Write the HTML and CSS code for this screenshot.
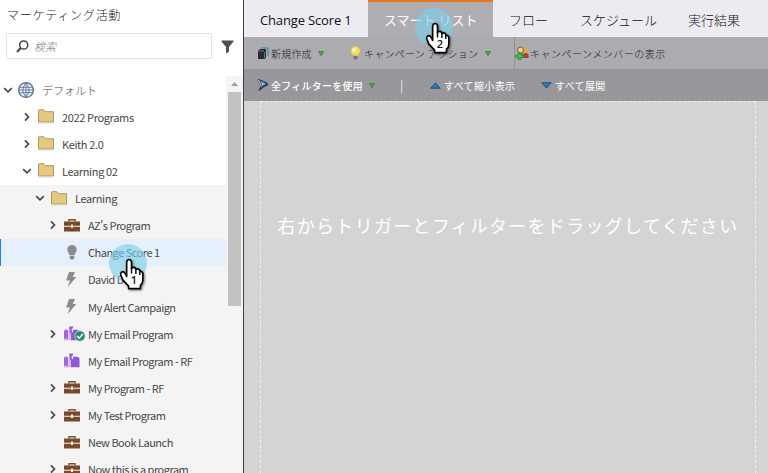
FILE: index.html
```html
<!DOCTYPE html>
<html lang="ja">
<head>
<meta charset="utf-8">
<title>マーケティング活動</title>
<link rel="stylesheet" href="styles.css">
</head>
<body>
<svg class="defs" width="0" height="0" aria-hidden="true">
  <defs>
    <symbol id="right" viewBox="0 0 10 10"><path d="M3 1.3 6.5 5 3 8.7" fill="none" stroke="#484848" stroke-width="1.7"/></symbol>
    <symbol id="down" viewBox="0 0 10 10"><path d="M1.2 3.2 5 6.8 8.8 3.2" fill="none" stroke="#484848" stroke-width="1.7"/></symbol>
    <symbol id="folder" viewBox="0 0 16 15"><path d="M.5 13V1.5Q.5.7 1.3.7H5.7L7.6 2.7H15.5V13Z" fill="#e6c87e" stroke="#a68e5f" stroke-width=".9"/><path d="M0 14H16" stroke="#d9d5ca"/></symbol>
    <symbol id="case" viewBox="0 0 16 14"><path d="M5 3V1.2H11V3" fill="none" stroke="#7a5034" stroke-width="1.5"/><path d="M0 3H16V7.2H9V6H7V7.2H0ZM0 8.2H7V9.6H9V8.2H16V13H0Z" fill="#78492b"/></symbol>
    <symbol id="bulb" viewBox="0 0 16 16"><path d="M8 0a5 5 0 0 0-5 5c0 2.3 2 3.700 2.300 6h5.400C11 8.700 13 7.300 13 5a5 5 0 0 0-5-5ZM5.500 11.700h5v2L9.500 15.500h-3l-1-1.800Z" fill="#8b8b8b"/></symbol>
    <symbol id="bolt" viewBox="0 0 16 16"><path d="M4.800 0H11.200L8.800 5.200H12.700L3.300 16 5.800 9H1.700Z" fill="#8b8b8b"/></symbol>
    <symbol id="mail" viewBox="0 0 16 14"><path d="M0 13V5Q0 3 2 3Q4.200 3 4.200 5V13Z" fill="#a267dc"/><path d="M0 12H5V13.800H0Z" fill="#c9a9e8"/><path d="M6.700 13.700V7L5.300 5V0H9V2H7.700V5L9 6V3.200H12Q15.500 3 15.500 6V13.700Z" fill="#9256d9"/><path d="M5.300 3V13.500" stroke="#c9a9e8"/></symbol>
    <symbol id="hand" viewBox="0 0 26 34"><path d="M7.500 19V4Q8 1.500 10 1.500T12.500 4V11Q13 9.500 15 9.700T17 12Q18.500 10.700 20 11.500T21 14Q23.700 13.200 24.200 16V23Q24 26.500 21.700 28V31.500H9.500V29L3.500 22.500 1.500 17.500Q1 14.200 3.500 14Q6 14.500 7.500 19Z" fill="#fff" stroke="#050505" stroke-width="1.700" stroke-linejoin="round"/><path d="M12.500 10V16M17 11.500V16.500M21 13.500V17.500" stroke="#111" stroke-width="1.500"/></symbol>
    <symbol id="green" viewBox="0 0 7 6"><path d="M.5.500H6.500L3.500 5.500Z" fill="#45b33b" stroke="#2c7d29" stroke-width="1"/></symbol>
  </defs>
</svg>
<div class="app">
  <aside class="sidebar">
    <h1 class="title">マーケティング活動</h1>
    <div class="search-row">
      <div class="search">
        <svg width="13" height="13" viewBox="0 0 13 13"><circle cx="7.700" cy="5" r="4.100" fill="none" stroke="#484848" stroke-width="1.500"/><path d="M4.800 8 1 12" stroke="#484848" stroke-width="2"/></svg>
        <span class="placeholder">検索</span>
      </div>
      <svg class="funnel" width="13" height="14" viewBox="0 0 13 14"><path d="M.5.500H12.500V1.500L8 7V11.500L5 13.500V7L.5 1.500Z" fill="#505050"/></svg>
    </div>
    <div class="tree-wrap">
      <div class="tree">
        <div class="row l0"><svg class="chev"><use href="#down"/></svg><svg class="icon" viewBox="0 0 16 16"><circle cx="8" cy="8" r="7.300" fill="#f5f8fb" stroke="#667b9b" stroke-width="1.500"/><path d="M1 5.300H15M1 10.700H15M.5 8H15.500M8 1V15M8 1Q1.500 8 8 15M8 1Q14.500 8 8 15" fill="none" stroke="#667b9b" stroke-width="1"/></svg><span class="jp">デフォルト</span></div>
        <div class="row l1"><svg class="chev"><use href="#right"/></svg><svg class="icon"><use href="#folder"/></svg><span>2022 Programs</span></div>
        <div class="row l1"><svg class="chev"><use href="#right"/></svg><svg class="icon"><use href="#folder"/></svg><span>Keith 2.0</span></div>
        <div class="row l1"><svg class="chev"><use href="#down"/></svg><svg class="icon"><use href="#folder"/></svg><span>Learning 02</span></div>
        <div class="row l2 shade"><svg class="chev"><use href="#down"/></svg><svg class="icon"><use href="#folder"/></svg><span>Learning</span></div>
        <div class="row l3 shade"><svg class="chev"><use href="#right"/></svg><svg class="icon"><use href="#case"/></svg><span>AZ's Program</span></div>
        <div class="row l3 selected"><i class="chev"></i><svg class="icon"><use href="#bulb"/></svg><span>Change Score 1</span></div>
        <div class="row l3 shade"><i class="chev"></i><svg class="icon"><use href="#bolt"/></svg><span>David D</span></div>
        <div class="row l3 shade"><i class="chev"></i><svg class="icon"><use href="#bolt"/></svg><span>My Alert Campaign</span></div>
        <div class="row l3 shade"><svg class="chev"><use href="#right"/></svg><div class="icon"><svg class="icon"><use href="#mail"/></svg><svg class="check" viewBox="0 0 12 12"><circle cx="6" cy="6" r="5.200" fill="#298a67" stroke="#f5f5f5" stroke-width=".6"/><path d="M3 6 5.200 8.200 9 3.800" fill="none" stroke="#fff" stroke-width="1.500"/></svg></div><span>My Email Program</span></div>
        <div class="row l3 shade"><i class="chev"></i><svg class="icon"><use href="#mail"/></svg><span>My Email Program - RF</span></div>
        <div class="row l3 shade"><svg class="chev"><use href="#right"/></svg><svg class="icon"><use href="#case"/></svg><span>My Program - RF</span></div>
        <div class="row l3 shade"><svg class="chev"><use href="#right"/></svg><svg class="icon"><use href="#case"/></svg><span>My Test Program</span></div>
        <div class="row l3 shade"><i class="chev"></i><svg class="icon"><use href="#case"/></svg><span>New Book Launch</span></div>
        <div class="row l3 shade"><svg class="chev"><use href="#right"/></svg><svg class="icon"><use href="#case"/></svg><span>Now this is a program</span></div>
      </div>
      <div class="scrollbar"><svg width="7" height="4" viewBox="0 0 7 4"><path d="M0 4 3.500 0 7 4Z" fill="#a0a0a0"/></svg><div class="thumb"></div></div>
    </div>
    <div class="click click-one"><svg><use href="#hand"/></svg><b>1</b></div>
  </aside>
  <main class="main">
    <nav class="tabs">
      <div class="tab t1">Change Score 1</div>
      <div class="tab active">スマート リスト</div>
      <div class="tab t3">フロー</div>
      <div class="tab t4">スケジュール</div>
      <div class="tab t5">実行結果</div>
    </nav>
    <div class="bar tools">
      <div class="item new"><svg width="12" height="13" viewBox="0 0 12 13"><path d="M4 1H11V9" fill="none" stroke="#4a91c4" stroke-width="1.500"/><path d="M1 4 3 2H9V10L8 12H1Z" fill="#282c30"/><path d="M1.500 4H7M7.500 5V11" stroke="#69717a"/></svg><span>新規作成</span><svg class="tri"><use href="#green"/></svg></div>
      <div class="item action"><svg width="11" height="14" viewBox="0 0 11 14"><path d="M5.500.5A4.700 4.700 0 0 0 .8 5C.8 7.500 3 8 3.300 9.500H7.700C8 8 10.200 7.500 10.200 5A4.700 4.700 0 0 0 5.500.5Z" fill="#fada66" stroke="#e7b64b" stroke-width=".7"/><circle cx="4" cy="4" r="2" fill="#fff8c8"/><path d="M3.500 10H7.500V12L6.500 13.500H4.500L3.500 12Z" fill="#77736e"/></svg><span>キャンペーン アクション</span><svg class="tri"><use href="#green"/></svg></div>
      <div class="item members"><svg width="14" height="14" viewBox="0 0 14 14"><circle cx="10" cy="4" r="3" fill="#dba94f"/><path d="M7 12V9Q10 5.500 13.500 8.500V12Z" fill="#b53b35"/><circle cx="5.500" cy="4" r="3" fill="#f0cf8c" stroke="#7a5933"/><path d="M2 12V9Q5 6 9 9V12Z" fill="#3a6da8"/><path d="M3 7H6V9H8.500V11.500H6V13.500H3V11.500H.5V9H3Z" fill="#4db344" stroke="#287a28" stroke-width=".6"/></svg><span>キャンペーンメンバーの表示</span></div>
    </div>
    <div class="bar filters">
      <div class="item all"><svg width="12" height="12" viewBox="0 0 12 12"><path d="M.5 1Q1.500-.3 3 .5L10 3.500Q12 5 10.500 6.500L6.500 8.500 3 11.500H1L3.500 8Z" fill="#293e58"/><path d="M3.500 2 9 4.800 5.500 7Z" fill="#8eb2da"/><path d="M1.500 1 4.500 7.500" stroke="#d9e6f2"/></svg><span>全フィルターを使用</span><svg class="tri"><use href="#green"/></svg></div>
      <div class="divider">|</div>
      <div class="item collapse"><svg width="11" height="7" viewBox="0 0 11 7"><path d="M.7 6.300H10.300L5.500.8Z" fill="#2f79b8" stroke="#17456f" stroke-width=".8"/></svg><span>すべて縮小表示</span></div>
      <div class="item expand"><svg width="11" height="7" viewBox="0 0 11 7"><path d="M.7.700H10.300L5.500 6.200Z" fill="#2f79b8" stroke="#17456f" stroke-width=".8"/></svg><span>すべて展開</span></div>
    </div>
    <section class="canvas"><div class="drop"><p>右からトリガーとフィルターをドラッグしてください</p></div></section>
    <div class="click click-two"><svg><use href="#hand"/></svg><b>2</b></div>
  </main>
</div>
</body>
</html>
```
FILE: styles.css
```css
* { box-sizing: border-box; }
body { margin: 0; background: #fff; overflow: hidden; font-family: "Noto Sans CJK JP", sans-serif; color: #484848; }
.defs { position: absolute; }
svg { display: block; flex: none; }
.app { display: flex; width: 768px; height: 473px; overflow: hidden; }
.sidebar { position: relative; width: 244px; flex: none; display: flex; flex-direction: column; border-right: 1px solid #3e3e42; background: #fff; overflow: hidden; }
.title { margin: 0 0 0 7px; height: 33px; line-height: 30px; font-size: 12px; font-weight: 300; letter-spacing: .8px; color: #222; white-space: nowrap; }
.search-row { display: flex; height: 43px; padding-left: 6px; gap: 9px; }
.search { display: flex; align-items: center; gap: 5px; width: 206px; height: 26px; padding-left: 9px; border: 1px solid #e3e3e3; border-radius: 2px; }
.placeholder { font-size: 11px; font-style: italic; font-weight: 300; color: #777; }
.funnel { margin-top: 7px; }
.tree-wrap { display: flex; height: 397px; background: #f4f4f4; overflow: hidden; }
.tree { width: 226px; background: #fff; }
.row { display: flex; align-items: center; height: 27.14px; font-size: 11px; line-height: 26px; letter-spacing: -.5px; white-space: nowrap; }
.l0 { padding-left: 3px; }
.l1 { padding-left: 22px; }
.l2 { padding-left: 35px; }
.l3 { padding-left: 48px; }
.l1, .l2 { letter-spacing: -.36px; }
.chev { width: 10px; height: 10px; margin-right: 6px; flex: none; }
.l0 .chev { margin-right: 5px; }
.icon { position: relative; width: 16px; height: 15px; margin-right: 8px; flex: none; }
.l0 .icon { height: 16px; }
.check { position: absolute; left: 10px; top: 4px; width: 12px; height: 12px; }
.jp { font-weight: 300; letter-spacing: 0; }
.shade { background: #f4f4f4; }
.selected { background: #e6f0fd; box-shadow: inset 1px 0 #2680eb; }
.scrollbar { width: 17px; display: flex; flex-direction: column; align-items: center; padding: 6px 0 0; background: #f4f4f4; }
.thumb { width: 13px; height: 214px; margin-top: 6px; background: #c1c1c1; }
.main { position: relative; width: 524px; display: flex; flex-direction: column; }
.tabs { display: flex; height: 37px; background: #ecebf2; }
.tab { height: 37px; padding-top: 2px; line-height: 36px; font-size: 13px; color: #111; white-space: nowrap; }
.t1 { width: 124px; padding-left: 16px; font-family: "Open Sans", sans-serif; letter-spacing: -.15px; }
.active { width: 125px; padding: 0 0 0 16px; border-top: 2px solid #e87722; background: #aeadb1; color: #fff; }
.t3 { width: 70px; padding-left: 16px; }
.t4 { width: 109px; padding-left: 17px; }
.t5 { padding-left: 16px; }
.t3, .t4, .t5 { font-weight: 300; }
.bar { display: flex; align-items: center; height: 32px; }
.tools { background: #acabaf; color: #222; }
.filters { background: #98979b; color: #fff; }
.item { display: flex; align-items: center; font-size: 10px; white-space: nowrap; letter-spacing: .35px; }
.item .tri { width: 6px; height: 5px; margin-left: 4px; }
.tools .item { font-weight: 300; }
.new { width: 106px; padding-left: 13px; gap: 2px; }
.new span { letter-spacing: .2px; }
.action { width: 164px; gap: 3px; letter-spacing: .25px; }
.members { height: 32px; border-left: 1px solid #929195; gap: 1px; letter-spacing: .5px; }
.all { width: 156px; padding-left: 13px; gap: 2px; font-weight: 500; letter-spacing: .25px; }
.divider { width: 30px; font-size: 12px; line-height: 28px; color: #eee9d8; }
.collapse { width: 111px; gap: 3px; }
.expand { gap: 3px; }
.canvas { height: 372px; padding: 0 12px 0 16px; background: #d4d4d4; }
.drop { height: 372px; padding-top: 109px; border: 1px dashed #eee; border-bottom: 0; text-align: center; }
.drop p { margin: 0; font-size: 18px; line-height: 28px; font-weight: 400; letter-spacing: 1.26px; color: #fff; white-space: nowrap; }
.click { position: absolute; width: 38px; height: 38px; border-radius: 50%; background: rgba(123, 207, 234, .62); }
.click svg { position: absolute; left: 10px; top: 14px; width: 26px; height: 33px; filter: drop-shadow(1px 1px 1px #0008); }
.click b { position: absolute; left: 21px; top: 29px; width: 8px; font: 11px/14px "Open Sans", sans-serif; font-weight: 600; text-align: center; color: #111; }
.click-one { left: 109px; top: 244px; }
.click-two { left: 171px; top: 8px; }
```
